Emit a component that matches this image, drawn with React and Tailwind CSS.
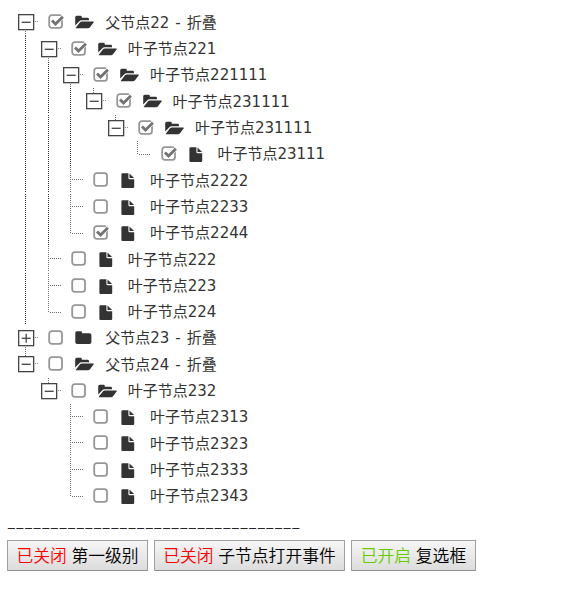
import React from "react";

/* Guides are listed per indent column:
   "" empty, "|" pass-through line, "t" branch, "l" last branch. */
const ROWS = [
  { guides: [], box: "minus", down: true, icon: "open", checked: true, text: "父节点22 - 折叠" },
  { guides: ["|"], box: "minus", down: true, icon: "open", checked: true, text: "叶子节点221" },
  { guides: ["|", "|"], box: "minus", down: true, icon: "open", checked: true, text: "叶子节点221111" },
  { guides: ["|", "|", "|"], box: "minus", up: true, icon: "open", checked: true, text: "叶子节点231111" },
  { guides: ["|", "|", "|", ""], box: "minus", up: true, icon: "open", checked: true, text: "叶子节点231111" },
  { guides: ["|", "|", "|", "", "", "l"], icon: "file", checked: true, text: "叶子节点23111" },
  { guides: ["|", "|", "t"], icon: "file", text: "叶子节点2222" },
  { guides: ["|", "|", "t"], icon: "file", text: "叶子节点2233" },
  { guides: ["|", "|", "l"], icon: "file", checked: true, text: "叶子节点2244" },
  { guides: ["|", "t"], icon: "file", text: "叶子节点222" },
  { guides: ["|", "t"], icon: "file", text: "叶子节点223" },
  { guides: ["|", "l"], icon: "file", text: "叶子节点224" },
  { guides: [], box: "plus", down: true, icon: "closed", text: "父节点23 - 折叠" },
  { guides: [], box: "minus", up: true, icon: "open", text: "父节点24 - 折叠" },
  { guides: [""], box: "minus", up: true, icon: "open", text: "叶子节点232" },
  { guides: ["", "", "t"], icon: "file", text: "叶子节点2313" },
  { guides: ["", "", "t"], icon: "file", text: "叶子节点2323" },
  { guides: ["", "", "t"], icon: "file", text: "叶子节点2333" },
  { guides: ["", "", "l"], icon: "file", text: "叶子节点2343" },
];

function Cell({ children }) {
  return (
    <span className="block h-[26.32px] w-[22.45px] shrink-0">
      <svg width="22" height="26" className="block overflow-visible" fill="none">
        {children}
      </svg>
    </span>
  );
}

function Guide({ kind }) {
  return (
    <Cell>
      {kind === "|" && <path d="M10.5 0V26" stroke="#333" strokeDasharray="1 1" />}
      {kind === "t" && <path d="M10.5 0V26M12 12.5H24" stroke="#6c6c6c" strokeDasharray="1 1" />}
      {kind === "l" && <path d="M10.5 0V14M12 13.5H24" stroke="#6c6c6c" strokeDasharray="1 1" />}
    </Cell>
  );
}

function Toggle({ kind, up, down }) {
  return (
    <Cell>
      {up && <path d="M10.5 0V5" stroke="#6c6c6c" strokeDasharray="1 1" />}
      {down && <path d="M10.5 22V27" stroke="#6c6c6c" strokeDasharray="1 1" />}
      <path d="M20 12.5H24" stroke="#888" strokeDasharray="1 1" />
      <rect x="3.65" y="5.65" width="15" height="15" fill="#fff" stroke="#444" strokeWidth="1.3" />
      <path d="M6.7 13.3H15.7" stroke="#444" strokeWidth="1.3" />
      {kind === "plus" && <path d="M11.2 8.8V17.8" stroke="#444" strokeWidth="1.3" />}
    </Cell>
  );
}

function Checkbox({ checked }) {
  return (
    <svg width="16" height="16" className="mr-[10px] block shrink-0 overflow-visible" fill="none">
      <rect x="1.2" y="1.2" width="12.8" height="12.6" rx="2.6" stroke="#979797" strokeWidth="1.8" />
      {checked && (
        <>
          <path d="M3.8 6.5L7.4 10.3L15 2.4" stroke="#fff" strokeWidth="4.2" />
          <path d="M4 6.5L7.5 10.1L14.9 2.7" stroke="#737373" strokeWidth="2.8" />
        </>
      )}
    </svg>
  );
}

function NodeIcon({ kind }) {
  return (
    <svg width="20" height="16" className="mr-[10.8px] block shrink-0 overflow-visible" fill="#333">
      {kind === "open" && (
        <g transform="translate(.8 .6)">
          <path d="M.4 10.8V2.7Q.4 1.2 1.9 1.2H5.7Q7 1.2 7 2.5V3.2H12.8Q14.2 3.2 14.2 4.6V5.7H6.8Q5.3 5.7 4.3 6.8Z" />
          <path d="M1 13.1L5.2 7.7Q6 6.8 7.2 6.8H18.2Q19.6 6.8 18.8 7.9L15.2 12.7Q14.4 13.7 13.2 13.7H1.5Q.6 13.7 1 13.1Z" />
        </g>
      )}
      {kind === "closed" && (
        <path transform="translate(.6 .3)" d="M.7 2.5Q.7 1 2.2 1H6.1Q7.5 1 7.5 2.4V3H15Q16.8 3 16.8 4.8V12Q16.8 13.8 15 13.8H2.5Q.7 13.8.7 12Z" />
      )}
      {kind === "file" && (
        <g transform="translate(.8 .2)">
          <path d="M2.7 1H8.6V5.8Q8.6 7 9.8 7H14.4V14.8Q14.4 15.9 13.3 15.9H2.7Q1.6 15.9 1.6 14.8V2.1Q1.6 1 2.7 1Z" />
          <path d="M9.7 1.2L14.3 5.9H9.7Z" />
        </g>
      )}
    </svg>
  );
}

function TreeRow({ row }) {
  const isLeaf = !row.box;
  return (
    <li className="flex h-[26.32px] items-start">
      {row.guides.map((g, i) => (
        <Guide key={i} kind={g} />
      ))}
      {!isLeaf && <Toggle kind={row.box} up={row.up} down={row.down} />}
      <span className="ml-[10.7px] flex h-[26.32px] items-start pt-[5px]">
        <Checkbox checked={row.checked} />
        <NodeIcon kind={row.icon} />
      </span>
      <span className="whitespace-nowrap pt-[0.3px] text-[15px] leading-[26px] text-[#333] [word-spacing:1.2px]">{row.text}</span>
    </li>
  );
}

function Button({ width, state, color, label }) {
  return (
    <button
      className={`${width} h-[31px] whitespace-nowrap rounded-[1px] border border-[#a0a0a0] border-b-[#8e8e8e] bg-linear-to-b from-[#f6f6f6] to-[#dcdcdc] pt-[2px] text-[16.8px] leading-[28px] font-[350] text-black`}
    >
      <span className={color}>{state}</span> {label}
    </button>
  );
}

export default function App() {
  return (
    <main className="h-[597px] w-[561px] overflow-hidden bg-white pt-[9.4px] font-['DejaVu_Sans','Noto_Sans_CJK_SC',sans-serif]">
      <ul className="pl-[15.3px]">
        {ROWS.map((row, i) => (
          <TreeRow key={i} row={row} />
        ))}
      </ul>
      <div className="ml-[7.3px] h-[30.5px] w-[197px] origin-left scale-x-[1.493] whitespace-nowrap pt-[6px] text-[16px] leading-[26px] font-extralight text-black [-webkit-text-stroke:0.35px_#000]">
        ----------------------------------
      </div>
      <div className="ml-[7px] flex gap-[6px] font-['Liberation_Sans','Noto_Sans_CJK_SC',sans-serif]">
        <Button width="w-[141px]" state="已关闭" color="text-[#ff0000]" label="第一级别" />
        <Button width="w-[191px]" state="已关闭" color="text-[#ff0000]" label="子节点打开事件" />
        <Button width="w-[125px]" state="已开启" color="text-[#66cc00]" label="复选框" />
      </div>
    </main>
  );
}
